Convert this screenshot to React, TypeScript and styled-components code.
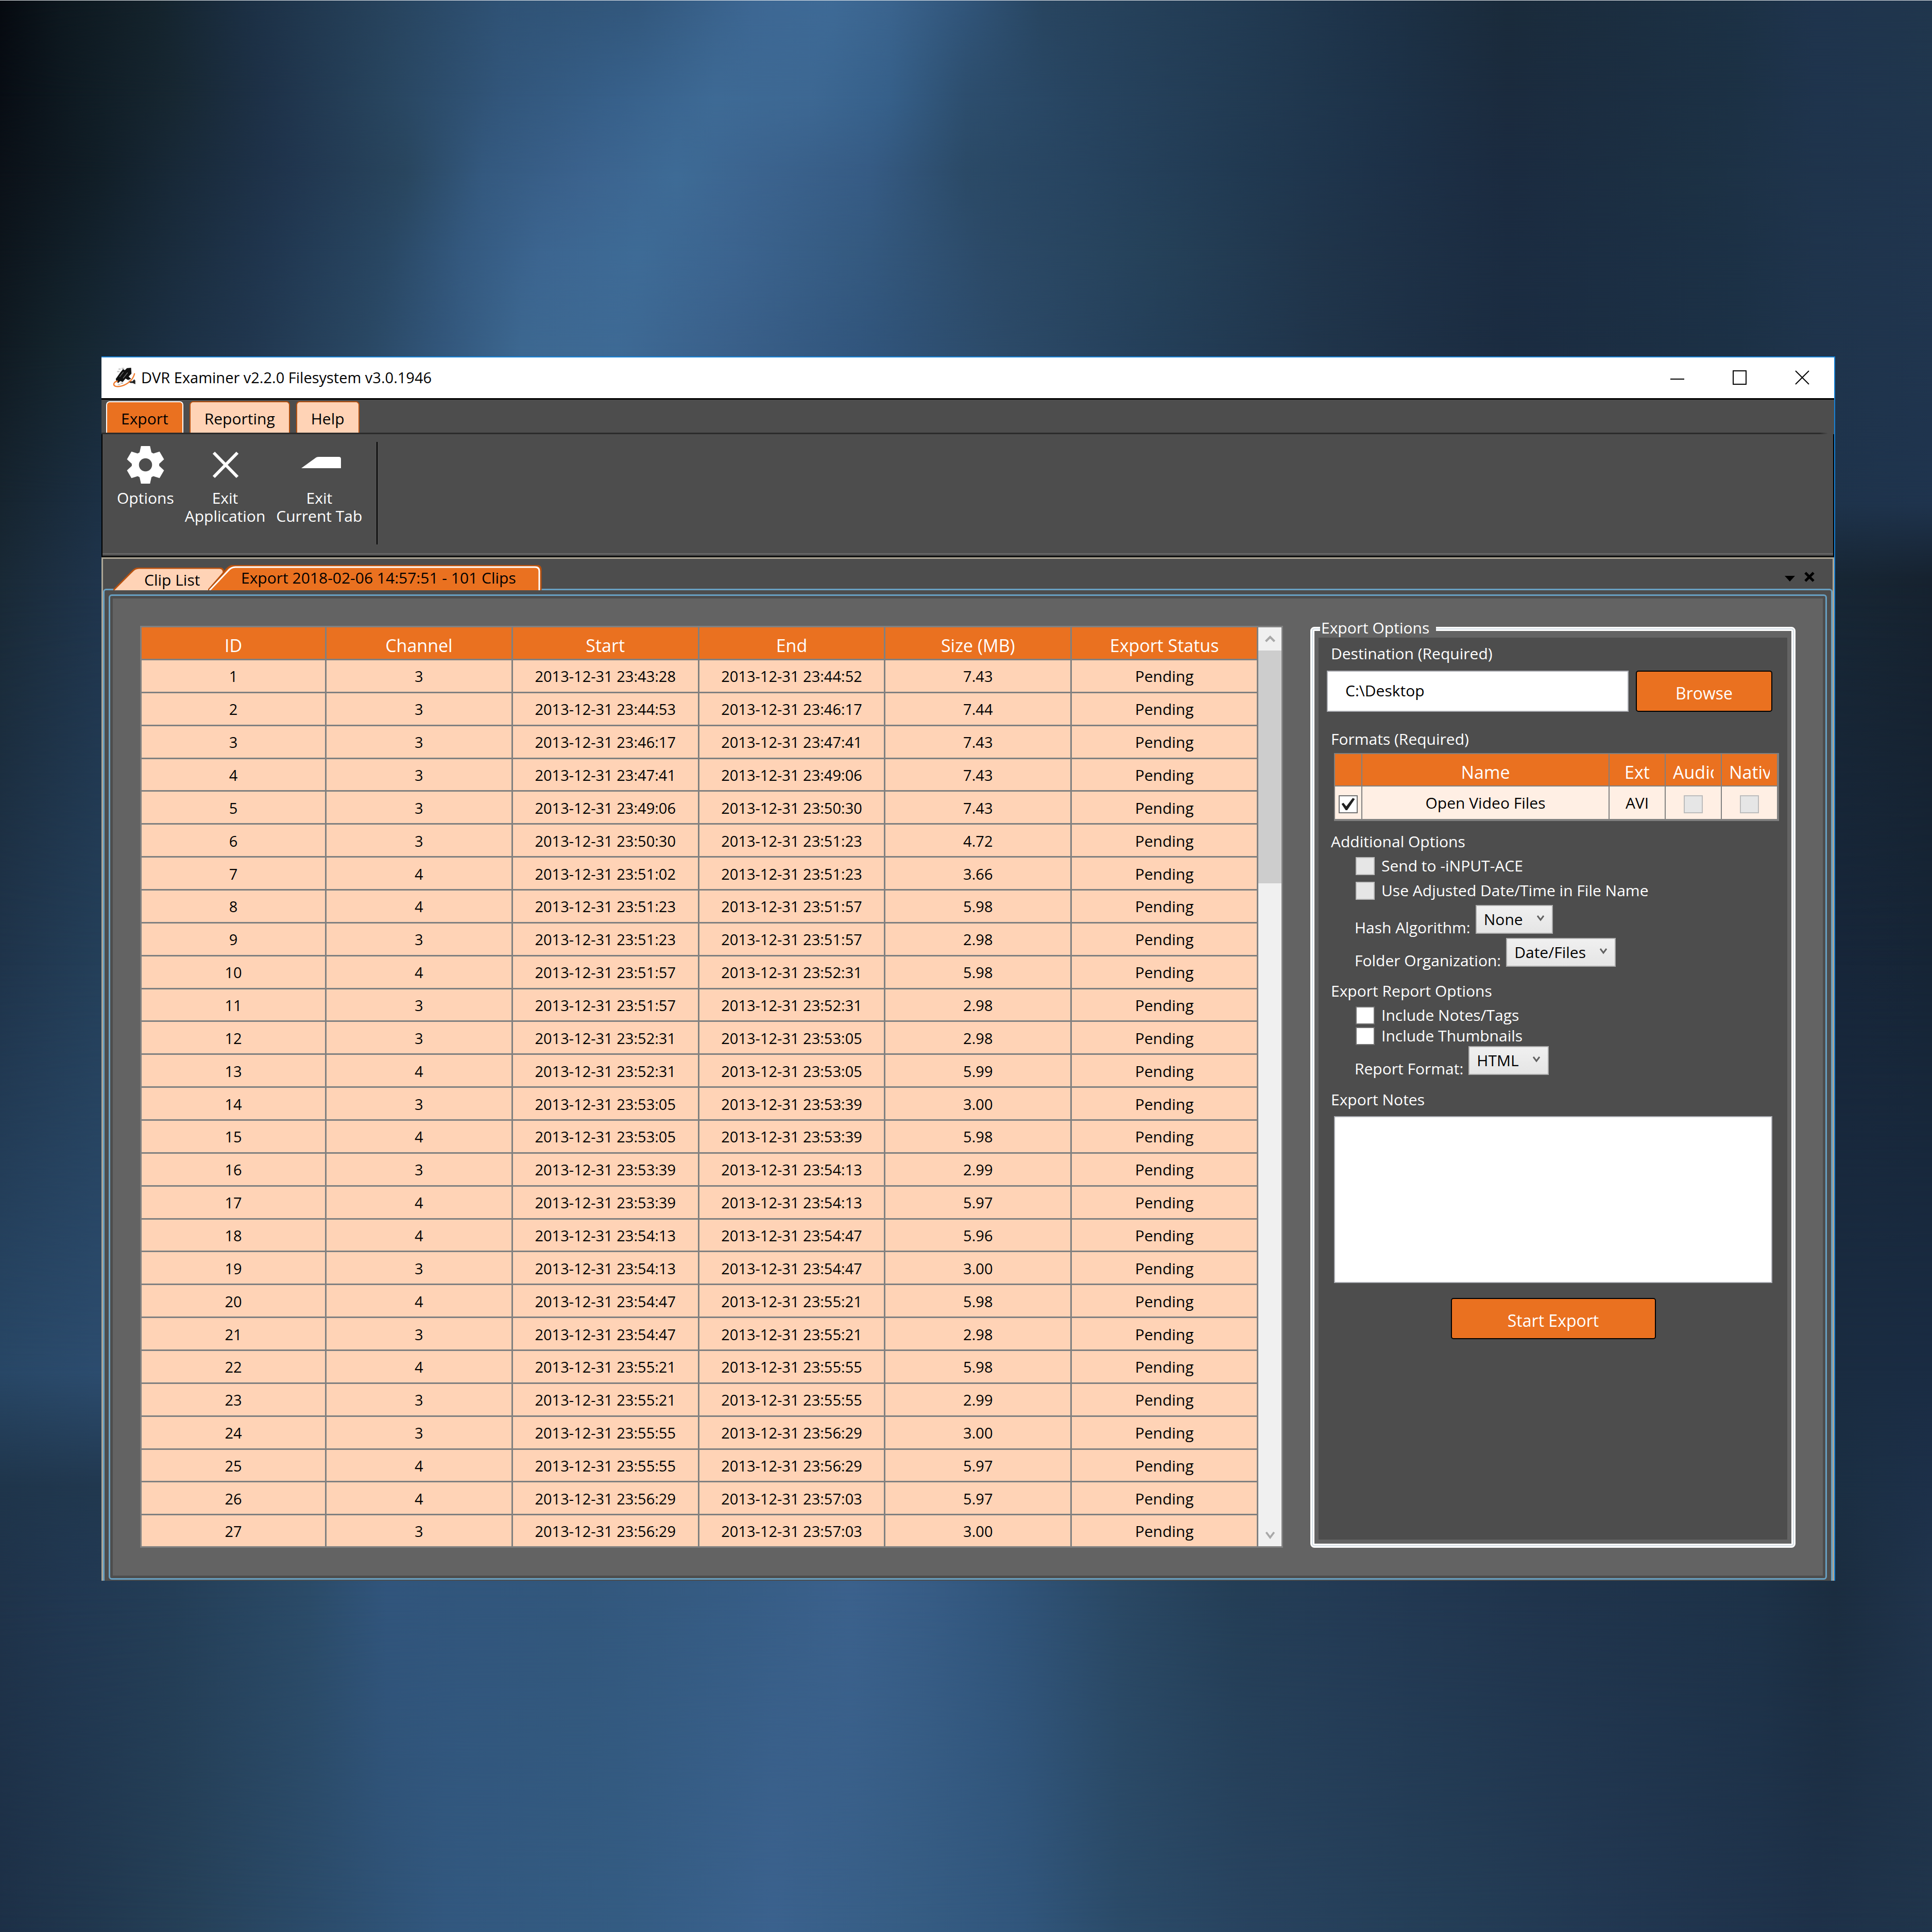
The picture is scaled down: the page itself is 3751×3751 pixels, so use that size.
import React from "react";
import styled, { createGlobalStyle, css } from "styled-components";

const color = {
  orange: "#ea7120",
  orangeEdge: "#b8510f",
  peach: "#ffd3b6",
  peachLight: "#ffefe4",
  chrome: "#4d4d4d",
  surface: "#636363",
  grid: "#808080",
  frame: "#68a0c2",
  edge: "#aea796",
  accent: "#1883d7",
};

const GlobalStyle = createGlobalStyle`
  *, *::before, *::after { box-sizing: border-box; }
  body { margin: 0; background: #20344c; }
  body, button, input, select, textarea {
    font-family: "Open Sans", "Noto Sans", sans-serif;
    font-size: 30px;
    line-height: 40px;
  }
  button { cursor: pointer; }
`;

/* ---------- desktop wallpaper ---------- */

const Desktop = styled.div`
  position: relative;
  min-height: 100vh;
  padding: 692px 188px 120px 197px;
  overflow: hidden;
  isolation: isolate;
`;

const WallpaperBand = styled.div<{ $stops: string; $from: number; $to: number; $depth: number }>`
  position: absolute;
  inset: 0;
  z-index: ${(p) => -p.$depth};
  background: linear-gradient(90deg, ${(p) => p.$stops});
  mask-image: linear-gradient(#000 ${(p) => p.$from}%, transparent ${(p) => p.$to}%);
`;

const TopEdge = styled.div`
  position: absolute;
  inset: 0 0 auto 0;
  height: 1px;
  background: #e4e8ec;
`;

const bands = [
  {
    at: 0,
    stops:
      "#060a10 0%, #0d171e 3%, #14232c 8%, #1c3045 13%, #27435d 20%, #2f5275 26%, #32577c 33%, #3d6793 39%, #3e6a96 43%, #3b648e 46%, #31557a 50%, #284560 54%, #223b53 64%, #1d3248 71%, #1a2b3b 78%, #1c3145 90%, #1f344d 94%, #20364d 100%",
  },
  {
    at: 5,
    stops:
      "#080d14 0%, #0f1b23 4%, #172732 9%, #1e3249 14%, #28455f 20%, #32567b 26%, #37608a 32%, #3e6a95 37%, #3d6893 42%, #36608a 46%, #2d4e6e 50%, #274460 56%, #223b53 64%, #1d3248 72%, #1b2b3e 78%, #1c3145 90%, #1f344d 94%, #20364d 100%",
  },
  {
    at: 9,
    stops:
      "#0b1118 0%, #111e27 5%, #182938 9%, #20354e 15%, #29465f 21%, #34597f 25%, #3b628d 30%, #3e6b96 35%, #3c648f 39%, #365b84 45%, #2b4a67 50%, #274460 56%, #213a52 64%, #1d3148 72%, #1b2b40 78%, #1c3144 88%, #1f344c 94%, #20354e 100%",
  },
  {
    at: 13,
    stops:
      "#0d151c 0%, #12202a 4%, #1a2c3d 9%, #20364f 14%, #294763 20%, #34597f 24%, #3c6590 28%, #3e6b96 33%, #3c648f 38%, #34597f 45%, #2c4a68 51%, #254159 60%, #20354b 68%, #1b2c41 78%, #1c3146 90%, #1f344c 94%, #20354e 100%",
  },
  {
    at: 18,
    stops:
      "#101a22 0%, #14242d 3%, #1c3044 9%, #21374f 13%, #2a4864 19%, #33577c 23%, #3d6891 27%, #3e6a95 32%, #3a608a 38%, #31557c 45%, #2c4a68 52%, #243f59 60%, #20354b 68%, #1b2c41 78%, #1c3146 90%, #1f344c 94%, #20354e 100%",
  },
  {
    at: 26,
    stops: "#16242f 0%, #1c3044 5%, #34597f 30%, #20354b 70%, #1e334b 94%, #1f344e 100%",
  },
  {
    at: 30,
    stops: "#192936 0%, #1f344b 5%, #34597f 30%, #20354b 70%, #172634 95%, #16222f 100%",
  },
  {
    at: 50,
    stops: "#1f344b 0%, #243f59 5%, #34597f 30%, #20354b 70%, #17263a 95%, #162536 100%",
  },
  {
    at: 71,
    stops: "#284766 0%, #2c4c6e 5%, #34597f 30%, #20354b 70%, #1a2c41 95%, #1a2c43 100%",
  },
  {
    at: 77,
    stops: "#1f354b 0%, #21384f 5%, #34597f 30%, #20354b 70%, #1b2f43 95%, #1d3049 100%",
  },
  {
    at: 82,
    stops:
      "#1f334a 0%, #213852 4%, #243e57 9%, #2b4b68 16%, #31557c 20%, #32577c 30%, #365c84 38%, #3b618c 44%, #375c85 48%, #31557b 52%, #2a4864 58%, #243e56 64%, #233a54 70%, #20344c 80%, #1d3248 91%, #1b2d40 95%, #20344c 100%",
  },
  {
    at: 100,
    stops:
      "#1d3047 0%, #21384f 5%, #264159 10%, #2c4d6d 17%, #32587f 23%, #345c83 32%, #3b628e 40%, #365d84 47%, #31567c 53%, #2b4b69 58%, #28435f 65%, #243e57 75%, #223852 83%, #1e3149 94%, #20354b 100%",
  },
];

/* ---------- window chrome ---------- */

const Window = styled.main`
  border-top: 2px solid ${color.accent};
  border-right: 2px solid ${color.accent};
  background: ${color.chrome};
  color: #000;
`;

const TitleBar = styled.header`
  display: flex;
  align-items: center;
  height: 82px;
  padding: 0 2px 2px 22px;
  background: #fff;
  border-bottom: 3px solid #000;
`;

const Title = styled.h1`
  flex: 1;
  margin: 0 0 0 11px;
  font-size: 29px;
  font-weight: 400;
`;

const CaptionButton = styled.button`
  display: grid;
  place-items: center;
  width: 121px;
  height: 76px;
  padding: 0;
  border: 0;
  background: transparent;
`;

const RibbonTabs = styled.nav`
  display: flex;
  align-items: flex-end;
  gap: 12px;
  height: 64px;
  padding-left: 9px;
`;

const RibbonTab = styled.button<{ $active?: boolean }>`
  height: 61px;
  padding: 4px 27px 0;
  border: 2px solid ${(p) => (p.$active ? "#fff" : color.orangeEdge)};
  border-bottom: 0;
  border-radius: 7px 7px 0 0;
  background: ${(p) => (p.$active ? color.orange : color.peach)};
`;

const RibbonRule = styled.div`
  height: 3px;
  margin-right: 12px;
  background: linear-gradient(90deg, #2b2b2b calc(100% - 16px), transparent);
`;

const Ribbon = styled.section`
  display: flex;
  align-items: flex-start;
  height: 239px;
  padding: 15px 0 0 28px;
  border: solid #000;
  border-width: 0 2px 2px;
  box-shadow: inset 0 -3px 0 #3a3a3a, inset 0 -6px 0 #666;
`;

const Tool = styled.button`
  display: flex;
  flex-direction: column;
  align-items: center;
  gap: 10px;
  margin-right: 21px;
  padding: 8px 0 0;
  border: 0;
  background: transparent;
  color: #fff;
  line-height: 35px;
  white-space: pre-line;

  svg { display: block; }
`;

const ToolDivider = styled.div`
  width: 2px;
  height: 199px;
  margin-left: 7px;
  background: #000;
`;

/* ---------- document area ---------- */

const Documents = styled.section`
  border: solid ${color.edge};
  border-width: 3px 3px 0;
`;

const DocumentBar = styled.div`
  position: relative;
  z-index: 1;
  display: flex;
  align-items: flex-end;
  height: 61px;
  margin-bottom: -3px;
  padding: 0 33px 0 20px;
`;

const DocumentTab = styled.button<{ $width: number; $active?: boolean }>`
  position: relative;
  display: block;
  flex: none;
  width: ${(p) => p.$width}px;
  height: ${(p) => (p.$active ? 49 : 44)}px;
  padding: 0 0 0 ${(p) => (p.$active ? 64 : 60)}px;
  border: 0;
  background: transparent;
  text-align: left;
  line-height: 48px;
  white-space: nowrap;
  overflow: hidden;
  ${(p) => p.$active && css`margin-left: -32px;`}
`;

const TabShape = styled.svg`
  position: absolute;
  inset: 0;
  z-index: -1;
`;

const BarActions = styled.div`
  display: flex;
  align-items: center;
  gap: 14px;
  height: 61px;
  margin-left: auto;
  padding-top: 8px;
`;

const BarButton = styled.button`
  display: grid;
  place-items: center;
  width: 24px;
  height: 32px;
  padding: 0;
  border: 0;
  background: transparent;
`;

const OuterFrame = styled.div`
  padding: 8px 8px 2px;
  border: solid ${color.frame};
  border-width: 3px 3px 0;
  border-radius: 6px 6px 0 0;
`;

const InnerFrame = styled.div`
  padding: 5px;
  border: 3px solid ${color.frame};
  border-radius: 6px;
`;

const Workspace = styled.div`
  display: grid;
  grid-template-columns: minmax(0, 1fr) 942px;
  gap: 53px;
  padding: 37px 53px 54px;
  background: ${color.surface};
`;

/* ---------- clip grid ---------- */

const ClipViewport = styled.div`
  display: flex;
  height: 1790px;
  margin-top: 16px;
  border: 3px solid ${color.grid};
`;

const Table = styled.table`
  width: 100%;
  height: 100%;
  table-layout: fixed;
  border-spacing: 0;
`;

const Column = styled.col<{ $width?: number }>`
  width: ${(p) => (p.$width ? `${p.$width}px` : "auto")};
`;

const HeadCell = styled.th`
  height: 64px;
  padding: 8px 0 0;
  border: solid ${color.grid};
  border-width: 0 3px 3px 0;
  background: ${color.orange};
  color: #fff;
  font-size: 34px;
  font-weight: 400;
  line-height: 48px;
  white-space: nowrap;
`;

const Cell = styled.td<{ $wordy?: boolean; $last?: boolean }>`
  padding: 2px 0 0;
  border: solid ${color.grid};
  border-width: 0 3px ${(p) => (p.$last ? 0 : 3)}px 0;
  background: ${color.peach};
  font-size: ${(p) => (p.$wordy ? 30 : 29)}px;
  text-align: center;
`;

const ScrollTrack = styled.div`
  display: flex;
  flex: none;
  flex-direction: column;
  width: 45px;
  background: #f0f0f0;
`;

const ScrollButton = styled.button`
  display: grid;
  place-items: center;
  height: 45px;
  padding: 0;
  border: 0;
  background: transparent;
`;

const ScrollThumb = styled.div`
  height: 452px;
  margin-bottom: auto;
  background: #cdcdcd;
`;

/* ---------- export options ---------- */

const OptionsGroup = styled.fieldset`
  display: flex;
  flex-direction: column;
  min-width: 0;
  margin: 0;
  padding: 0 13px 13px;
  border: 3px solid #fff;
  border-radius: 8px;
  box-shadow: inset 0 0 0 2px #d3dde4, inset 0 0 0 5px #fff;
`;

const GroupLegend = styled.legend`
  height: 39px;
  margin-left: 3px;
  padding: 0 13px 0 2px;
  background: ${color.surface};
  color: #fff;
  line-height: 39px;
`;

const Panel = styled.div`
  flex: 1;
  padding: 11px 29px 0 24px;
  background: ${color.chrome};
  color: #fff;
`;

const Caption = styled.div<{ $gap?: number }>`
  margin-top: ${(p) => p.$gap ?? 0}px;
`;

const DestinationRow = styled.div`
  display: flex;
  gap: 14px;
  margin: 13px 0 0 -8px;
`;

const PathInput = styled.input`
  flex: 1;
  min-width: 0;
  height: 80px;
  padding: 0 34px 3px;
  border: 2px solid #abadb3;
  background: #fff;
  color: #000;
`;

const ActionButton = styled.button<{ $width: number }>`
  width: ${(p) => p.$width}px;
  height: 80px;
  padding: 8px 0 0;
  border: 2px solid #000;
  border-radius: 5px;
  background: ${color.orange};
  color: #fff;
  font-size: 32px;
`;

const FormatsBox = styled.div`
  height: 132px;
  margin: 7px -13px 0 6px;
  border: solid ${color.grid};
  border-width: 2px 2px 4px;
`;

const FormatHead = styled(HeadCell)`
  height: 63px;
  padding: 8px 14px 0;
  border-width: 0 2px 2px 0;
`;

const ClippedHeading = styled.div`
  overflow: hidden;
`;

const FormatCell = styled(Cell)`
  padding: 0;
  border-width: 0 2px 0 0;
  background: ${color.peachLight};
  color: #000;
  font-size: 30px;
`;

const Check = styled.input`
  appearance: none;
  display: inline-grid;
  place-items: center;
  flex: none;
  width: 37px;
  height: 35px;
  margin: 0;
  border: 2px solid #707070;
  background: #fff;
  vertical-align: middle;

  &:disabled {
    border-color: #bcbcbc;
    background: #e6e6e6;
  }
  &:checked::before {
    content: "";
    width: 26px;
    height: 24px;
    background: #212121;
    clip-path: polygon(0 48%, 15% 40%, 36% 68%, 84% 0, 100% 8%, 42% 100%, 32% 100%);
  }
`;

const Indented = styled.div<{ $gap: number }>`
  margin: ${(p) => p.$gap}px 0 0 46px;
`;

const CheckRow = styled.label<{ $height: number }>`
  display: flex;
  align-items: center;
  gap: 13px;
  height: ${(p) => p.$height}px;
  padding-left: 2px;
`;

const PickRow = styled.div<{ $offset?: number }>`
  display: flex;
  gap: 10px;
  height: 64px;
  margin-top: ${(p) => p.$offset ?? 0}px;

  label { align-self: flex-end; }
`;

const Picker = styled.div`
  position: relative;
  height: 56px;

  svg {
    position: absolute;
    top: 18px;
    right: 17px;
    pointer-events: none;
  }
`;

const Select = styled.select`
  appearance: none;
  height: 56px;
  padding: 0 56px 0 14px;
  border: 2px solid #acacac;
  border-radius: 0;
  background: linear-gradient(#f0f0f0, #e5e5e5);
  color: #000;
`;

const Notes = styled.textarea`
  display: block;
  width: calc(100% - 6px);
  height: 324px;
  margin: 12px 0 29px 6px;
  padding: 8px;
  border: 2px solid #abadb3;
  background: #fff;
  resize: none;
`;

const Centered = styled.div`
  display: flex;
  justify-content: center;
  padding-left: 6px;
`;

/* ---------- drawings ---------- */

const Logo = () => (
  <svg width="44" height="38" viewBox="0 0 128 112" aria-hidden="true">
    <path d="M32 4h12v8H32zM24 18h14v8H24zM50 0h14v10H50z" fill="#c9c9c9" />
    <path d="M44 24 58 8l10 6L80 2l24-2 2 34-16 16 14 14-18 6-14-8-16 20-14-6-12 12-10-10-4-14z" fill="#111" />
    <path d="m38 52 22-28M58 60l26-32" stroke="#777" strokeWidth="4" />
    <path d="m90 74 20 4 12-12 6 8v20l-14-6-18-2z" fill="#222" />
    <path d="M28 76C4 80-2 98 14 106c36 8 98-20 110-74" fill="none" stroke="#f07a2c" strokeWidth="7" />
    <path d="M28 96h14M44 88h14" stroke="#bbb" strokeWidth="6" />
  </svg>
);

const Gear = () => {
  const teeth = [0, 60, 120, 180, 240, 300];
  return (
    <svg width="73" height="73" viewBox="-50 -50 100 100" aria-hidden="true">
      {teeth.map((a) => (
        <path key={a} d="M-12-50h24l4 18h-32z" fill="#fff" transform={`rotate(${a})`} />
      ))}
      <circle r="27" fill="none" stroke="#fff" strokeWidth="19" />
    </svg>
  );
};

const CrossIcon = () => (
  <svg width="73" height="73" viewBox="0 0 73 73" aria-hidden="true">
    <path d="m15 13 46 47M61 13 15 60" stroke="#fff" strokeWidth="6" />
  </svg>
);

const TabIcon = () => (
  <svg width="85" height="73" viewBox="0 0 85 73" aria-hidden="true">
    <path d="M8 43 37 22q2-1 5-1h39q4 0 4 4v18z" fill="#fff" />
  </svg>
);

const Chevron = ({ up, tone = "#606060", size = 14 }: { up?: boolean; tone?: string; size?: number }) => (
  <svg width={size} height={size} viewBox="0 0 14 14" aria-hidden="true">
    <path d={up ? "m1 10 6-6 6 6" : "m1 3 6 8 6-8"} fill="none" stroke={tone} strokeWidth="3" />
  </svg>
);

const SlantedShape = ({ width, active }: { width: number; active?: boolean }) => {
  const h = active ? 49 : 44;
  const r = width - 2;
  const outline = (d: number) =>
    `M${d} ${h}L${36 + d} ${8 + d}Q${42 + d} ${1 + d} ${50 + d} ${1 + d}H${r - 8 - d}Q${r - d} ${1 + d} ${r - d} ${9 + d}V${h}`;
  return (
    <TabShape width={width} height={h} aria-hidden="true">
      <path d={outline(0)} fill={active ? color.orange : color.peach} stroke={color.orangeEdge} strokeWidth="3" />
      {active && <path d={outline(3)} fill="none" stroke="#fff" strokeWidth="3" />}
    </TabShape>
  );
};

/* ---------- data ---------- */

const columns = ["ID", "Channel", "Start", "End", "Size (MB)", "Export Status"];

const clips: [number, string, string, string][] = [
  [3, "23:43:28", "23:44:52", "7.43"],
  [3, "23:44:53", "23:46:17", "7.44"],
  [3, "23:46:17", "23:47:41", "7.43"],
  [3, "23:47:41", "23:49:06", "7.43"],
  [3, "23:49:06", "23:50:30", "7.43"],
  [3, "23:50:30", "23:51:23", "4.72"],
  [4, "23:51:02", "23:51:23", "3.66"],
  [4, "23:51:23", "23:51:57", "5.98"],
  [3, "23:51:23", "23:51:57", "2.98"],
  [4, "23:51:57", "23:52:31", "5.98"],
  [3, "23:51:57", "23:52:31", "2.98"],
  [3, "23:52:31", "23:53:05", "2.98"],
  [4, "23:52:31", "23:53:05", "5.99"],
  [3, "23:53:05", "23:53:39", "3.00"],
  [4, "23:53:05", "23:53:39", "5.98"],
  [3, "23:53:39", "23:54:13", "2.99"],
  [4, "23:53:39", "23:54:13", "5.97"],
  [4, "23:54:13", "23:54:47", "5.96"],
  [3, "23:54:13", "23:54:47", "3.00"],
  [4, "23:54:47", "23:55:21", "5.98"],
  [3, "23:54:47", "23:55:21", "2.98"],
  [4, "23:55:21", "23:55:55", "5.98"],
  [3, "23:55:21", "23:55:55", "2.99"],
  [3, "23:55:55", "23:56:29", "3.00"],
  [4, "23:55:55", "23:56:29", "5.97"],
  [4, "23:56:29", "23:57:03", "5.97"],
  [3, "23:56:29", "23:57:03", "3.00"],
];
const day = "2013-12-31";

const ClipGrid = () => (
  <ClipViewport>
    <Table>
      <colgroup>
        <Column $width={359} />
        <Column span={5} />
      </colgroup>
      <thead>
        <tr>
          {columns.map((c) => (
            <HeadCell key={c} scope="col">{c}</HeadCell>
          ))}
        </tr>
      </thead>
      <tbody>
        {clips.map(([channel, start, end, size], i) => {
          const last = i === clips.length - 1;
          return (
            <tr key={i}>
              <Cell $last={last}>{i + 1}</Cell>
              <Cell $last={last}>{channel}</Cell>
              <Cell $last={last}>{day} {start}</Cell>
              <Cell $last={last}>{day} {end}</Cell>
              <Cell $last={last}>{size}</Cell>
              <Cell $last={last} $wordy>Pending</Cell>
            </tr>
          );
        })}
      </tbody>
    </Table>
    <ScrollTrack>
      <ScrollButton aria-label="Scroll up"><Chevron up tone="#a8a8a8" size={20} /></ScrollButton>
      <ScrollThumb />
      <ScrollButton aria-label="Scroll down"><Chevron tone="#a8a8a8" size={18} /></ScrollButton>
    </ScrollTrack>
  </ClipViewport>
);

const Pick = ({ id, label, value, offset }: { id: string; label: string; value: string; offset?: number }) => (
  <PickRow $offset={offset}>
    <label htmlFor={id}>{label}</label>
    <Picker>
      <Select id={id} defaultValue={value}>
        <option>{value}</option>
      </Select>
      <Chevron />
    </Picker>
  </PickRow>
);

const ExportOptions = () => (
  <OptionsGroup>
    <GroupLegend>Export Options</GroupLegend>
    <Panel>
      <Caption><label htmlFor="destination">Destination (Required)</label></Caption>
      <DestinationRow>
        <PathInput id="destination" defaultValue="C:\Desktop" />
        <ActionButton $width={265}>Browse</ActionButton>
      </DestinationRow>

      <Caption $gap={33}>Formats (Required)</Caption>
      <FormatsBox>
        <Table>
          <colgroup>
            <Column $width={53} />
            <Column />
            <Column span={3} $width={109} />
          </colgroup>
          <thead>
            <tr>
              <FormatHead aria-label="Selected" />
              <FormatHead scope="col">Name</FormatHead>
              <FormatHead scope="col">Ext</FormatHead>
              <FormatHead scope="col"><ClippedHeading>Audio</ClippedHeading></FormatHead>
              <FormatHead scope="col"><ClippedHeading>Native</ClippedHeading></FormatHead>
            </tr>
          </thead>
          <tbody>
            <tr>
              <FormatCell><Check type="checkbox" defaultChecked aria-label="Export Open Video Files" /></FormatCell>
              <FormatCell>Open Video Files</FormatCell>
              <FormatCell>AVI</FormatCell>
              <FormatCell><Check type="checkbox" disabled aria-label="Audio" /></FormatCell>
              <FormatCell><Check type="checkbox" disabled aria-label="Native" /></FormatCell>
            </tr>
          </tbody>
        </Table>
      </FormatsBox>

      <Caption $gap={20}>Additional Options</Caption>
      <Indented $gap={3}>
        <CheckRow $height={48}><Check type="checkbox" disabled />Send to -iNPUT-ACE</CheckRow>
        <CheckRow $height={48}><Check type="checkbox" disabled />Use Adjusted Date/Time in File Name</CheckRow>
        <Pick id="hash" label="Hash Algorithm:" value="None" offset={4} />
        <Pick id="folders" label="Folder Organization:" value="Date/Files" />
      </Indented>

      <Caption $gap={19}>Export Report Options</Caption>
      <Indented $gap={7}>
        <CheckRow $height={40}><Check type="checkbox" />Include Notes/Tags</CheckRow>
        <CheckRow $height={40}><Check type="checkbox" />Include Thumbnails</CheckRow>
        <Pick id="report" label="Report Format:" value="HTML" />
      </Indented>

      <Caption $gap={20}><label htmlFor="notes">Export Notes</label></Caption>
      <Notes id="notes" />
      <Centered>
        <ActionButton $width={398}>Start Export</ActionButton>
      </Centered>
    </Panel>
  </OptionsGroup>
);

export default function App() {
  return (
    <Desktop>
      <GlobalStyle />
      {bands.map((band, i) => (
        <WallpaperBand
          key={band.at}
          $stops={band.stops}
          $from={i === bands.length - 1 ? 100 : band.at}
          $to={bands[i + 1]?.at ?? 101}
          $depth={i + 1}
        />
      ))}
      <TopEdge />
      <Window>
        <TitleBar>
          <Logo />
          <Title>DVR Examiner v2.2.0 Filesystem v3.0.1946</Title>
          <CaptionButton aria-label="Minimize">
            <svg width="28" height="28"><path d="M0 17h27" stroke="#000" strokeWidth="2" /></svg>
          </CaptionButton>
          <CaptionButton aria-label="Maximize">
            <svg width="28" height="28"><path d="M1 1h25v26H1z" fill="none" stroke="#000" strokeWidth="2" /></svg>
          </CaptionButton>
          <CaptionButton aria-label="Close">
            <svg width="28" height="28"><path d="m1 1 26 26M27 1 1 27" stroke="#000" strokeWidth="2" /></svg>
          </CaptionButton>
        </TitleBar>

        <RibbonTabs>
          <RibbonTab $active>Export</RibbonTab>
          <RibbonTab>Reporting</RibbonTab>
          <RibbonTab>Help</RibbonTab>
        </RibbonTabs>
        <RibbonRule />
        <Ribbon>
          <Tool><Gear />Options</Tool>
          <Tool><CrossIcon />{"Exit\nApplication"}</Tool>
          <Tool><TabIcon />{"Exit\nCurrent Tab"}</Tool>
          <ToolDivider />
        </Ribbon>

        <Documents>
          <DocumentBar>
            <DocumentTab $width={216}>
              <SlantedShape width={216} />
              Clip List
            </DocumentTab>
            <DocumentTab $width={648} $active>
              <SlantedShape width={648} active />
              Export 2018-02-06 14:57:51 - 101 Clips
            </DocumentTab>
            <BarActions>
              <BarButton aria-label="Open documents">
                <svg width="20" height="18"><path d="M0 7h20L10 18z" /></svg>
              </BarButton>
              <BarButton aria-label="Close document">
                <svg width="20" height="20"><path d="m2 2 16 16M18 2 2 18" stroke="#000" strokeWidth="5" /></svg>
              </BarButton>
            </BarActions>
          </DocumentBar>
          <OuterFrame>
            <InnerFrame>
              <Workspace>
                <ClipGrid />
                <ExportOptions />
              </Workspace>
            </InnerFrame>
          </OuterFrame>
        </Documents>
      </Window>
    </Desktop>
  );
}
